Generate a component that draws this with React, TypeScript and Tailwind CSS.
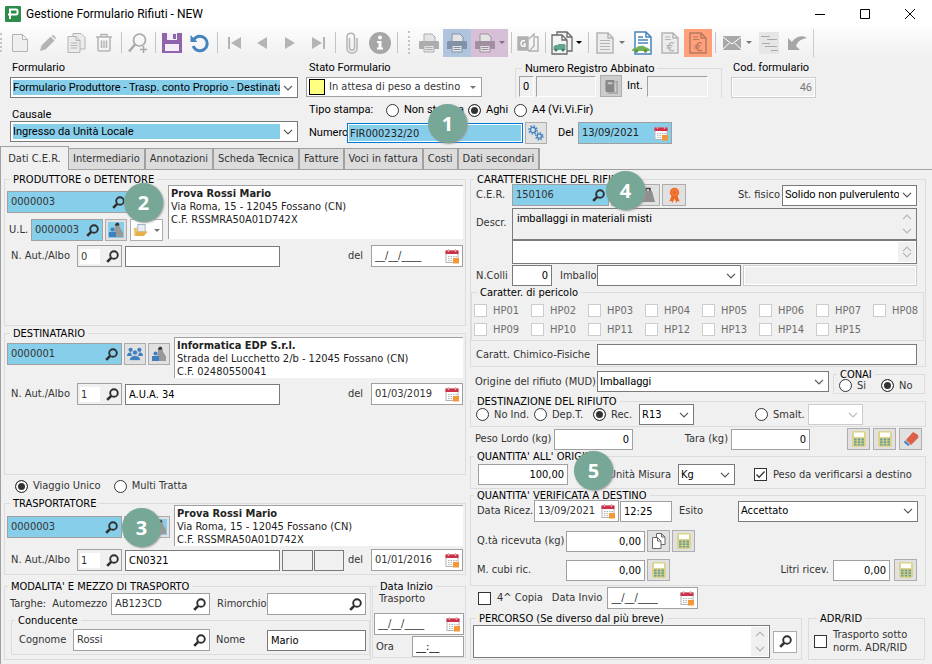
import type { ReactNode } from "react";

/* ---------- icons ---------- */

const Chevron = ({ tone = "#555" }: { tone?: string }) => (
  <svg viewBox="0 0 10 6" className="pointer-events-none h-[6px] w-[10px] shrink-0" fill="none" stroke={tone} strokeWidth="1.2">
    <path d="M1 .8 5 4.8 9 .8" />
  </svg>
);

const Caret = ({ tone = "#777" }: { tone?: string }) => (
  <svg viewBox="0 0 6 3" className="pointer-events-none h-[3px] w-[6px] shrink-0" fill={tone}>
    <path d="M0 0h6L3 3z" />
  </svg>
);

const Lens = () => (
  <svg viewBox="0 0 13 13" className="size-[13px] shrink-0" fill="none" stroke="#2f2f2f">
    <circle cx="8" cy="5" r="3.8" strokeWidth="1.9" />
    <path d="M5.2 7.8 1.2 11.8" strokeWidth="2.6" />
  </svg>
);

const Calendar = () => (
  <svg viewBox="0 0 15 15" className="size-[15px] shrink-0">
    <rect x="1" y="2" width="12" height="11.5" fill="#fff" stroke="#b4b4b4" />
    <rect x=".5" y="1.5" width="13" height="3.5" fill="#d0314a" />
    <path d="M3.5 0v3M10.5 0v3" stroke="#e9a3ad" strokeWidth="1.2" />
    <path d="M3 7.5h9M3 9.5h9M3 11.5h9" stroke="#b4b4b4" strokeDasharray="1.5 1" />
    <rect x="8" y="9" width="6" height="5.5" fill="#f2983b" />
  </svg>
);

const Calculator = () => (
  <svg viewBox="0 0 14 16" className="h-[16px] w-[14px]">
    <rect width="14" height="16" rx="2" fill="#ddd38a" />
    <rect x="2" y="1.5" width="10" height="4.5" fill="#fff" />
    <g fill="#6f9f90">
      <path d="M2 7.5h2.6v2H2zM5.7 7.5h2.6v2H5.7zM9.4 7.5H12v2H9.4zM2 10.2h2.6v1.8H2zM5.7 10.2h2.6V12H5.7zM9.4 10.2H12V12H9.4zM2 12.8h2.6v1.6H2zM5.7 12.8h2.6v1.6H5.7zM9.4 12.8H12v1.6H9.4z" />
    </g>
  </svg>
);

const Eraser = () => (
  <svg viewBox="0 0 16 16" className="size-[16px]">
    <path d="M10 1.5 14.5 4 15 6.5 8 13.5 3.5 9z" fill="#dc6047" stroke="#dc6047" strokeLinejoin="round" />
    <path d="M2 9.2 7 14 5 14.8 1 11.5z" fill="#3f83c4" />
  </svg>
);

const Operator = ({ highlight = false }: { highlight?: boolean }) => (
  <svg viewBox="0 0 16 16" className="size-[16px]">
    {highlight && <rect width="16" height="16" fill="#87ceeb" />}
    <path d="M7 2.5 9 .5l2 1 1 4 3 5v4.500H6z" fill="#999" />
    <path d="M7 2.5 9 .5l2 1 .3 1.700L8 4z" fill="#333" />
    <circle cx="4.500" cy="7.500" r="2" fill="#3f7fbf" />
    <path d="M1 10h7v5H1z" fill="#3f7fbf" />
  </svg>
);

const People = () => (
  <svg viewBox="0 0 16 16" className="size-[16px]" fill="#3f7fbf">
    <circle cx="3.600" cy="3.800" r="2.100" />
    <circle cx="12.400" cy="3.800" r="2.100" />
    <path d="M0 10c0-3 2-4 4-3.500L5 10zM16 10c0-3-2-4-4-3.500L11 10z" />
    <circle cx="8" cy="6.500" r="2.600" stroke="#e1e1e1" strokeWidth=".7" />
    <path d="M2.500 14.500c0-3.500 2.500-5 5.500-5s5.500 1.500 5.500 5z" stroke="#e1e1e1" strokeWidth=".7" />
  </svg>
);

const Weight = () => (
  <svg viewBox="0 0 16 16" className="size-[16px]">
    <path d="M4 4h8l3 11H1z" fill="#8f8f8f" />
    <path d="M6 4V1.500h4V4" fill="none" stroke="#444" strokeWidth="1.600" />
  </svg>
);

const Ribbon = () => (
  <svg viewBox="0 0 16 18" className="h-[17px] w-[15px]" fill="#ed6b23">
    <path d="m5 9-2.500 6.500 2.300-.6 1.200 2L8 12l2 4.900 1.200-2 2.300.6L11 9z" />
    <circle cx="8" cy="5.800" r="5" />
    <circle cx="8" cy="5.800" r="3" stroke="#f4a173" strokeWidth=".6" />
  </svg>
);

const Gears = () => (
  <svg viewBox="0 0 16 16" className="size-[16px]" fill="none" stroke="#3f7fbf">
    <circle cx="5" cy="5" r="2.600" strokeWidth="1.300" />
    <circle cx="5" cy="5" r="4" strokeWidth="1.500" strokeDasharray="1.500 1.640" />
    <circle cx="11.300" cy="11.300" r="2.100" strokeWidth="1.300" />
    <circle cx="11.300" cy="11.300" r="3.500" strokeWidth="1.500" strokeDasharray="1.400 1.350" />
  </svg>
);

const FolderForm = () => (
  <svg viewBox="0 0 16 14" className="h-[13px] w-[16px]">
    <rect x="4.500" y=".5" width="8" height="8" fill="#e6eef5" stroke="#9db4c8" />
    <path d="M0 4h4v5h7l4-1-4 5H1z" fill="#f0c46b" />
    <path d="M1 13 4 8h11l-4 5z" fill="#e7b04c" />
  </svg>
);

const Pages = () => (
  <svg viewBox="0 0 14 16" className="h-[16px] w-[14px]" fill="#fff" stroke="#6a6a6a">
    <path d="M4.500.5h5l3.500 3.500v7.500H4.500zM9.500.5V4H13" />
    <path d="M.5 4.500h5L9 8v7.500H.5zM5.500 4.500V8H9" />
  </svg>
);

const Book = () => (
  <svg viewBox="0 0 16 16" className="size-[15px]">
    <path d="M2 1h9v13H3.500C2 14 1.500 13 1.500 12V2z" fill="#888" />
    <path d="M12 3h2v12H4" fill="none" stroke="#a2a2a2" strokeWidth="1.500" />
    <path d="M4 3.500h5v2H4z" fill="#ccc" />
  </svg>
);

const G = "#b4b4b4";

const Doc = ({ stroke = G, fill = "none", children }: { stroke?: string; fill?: string; children?: ReactNode }) => (
  <svg viewBox="0 0 20 22" className="h-[22px] w-[20px]" fill={fill} stroke={stroke} strokeWidth="1.500">
    <path d="M2 1h11l5 5v15H2zM13 1v5h5" />
    {children}
  </svg>
);

const Euro = ({ stroke = G, fill = "none" }: { stroke?: string; fill?: string }) => (
  <Doc stroke={stroke} fill={fill}>
    <path d="M5 5h5M5 7.500h6" strokeWidth="1.200" />
    <path d="M14 11.200c-3.500-1.500-5.500.8-5.500 3.600s2 4.900 5.500 3.500M6.500 13.700h6M6.500 15.800h5" strokeWidth="1.300" fill="none" />
  </Doc>
);

const Printer = ({ tone = "#a8a8a8" }: { tone?: string }) => (
  <svg viewBox="0 0 22 20" className="h-[20px] w-[22px]">
    <path d="M6 1h8l3 3v5H6z" fill="#e4e4e4" stroke={tone} />
    <path d="M2.500 8h17c1 0 1.500.5 1.500 1.500V16H1V9.500C1 8.500 1.500 8 2.500 8z" fill={tone} />
    <path d="M6 12.500h10V19H6z" fill="#e4e4e4" stroke={tone} />
    <path d="M7.500 14.500h7M7.500 16.500h7" stroke={tone} />
  </svg>
);

/* ---------- building blocks ---------- */

const plain = "font-[Roboto,'Liberation_Sans',sans-serif]";
const humanist = "font-['DejaVu_Sans_Condensed','DejaVu_Sans',sans-serif]";

function Group({ legend, className = "", children }: { legend: string; className?: string; children: ReactNode }) {
  return (
    <fieldset className={`min-w-0 border border-[#dcdcdc] ${className}`}>
      <legend className="ml-[3px] h-0 px-[3px] leading-[0px] whitespace-nowrap text-black">{legend}</legend>
      {children}
    </fieldset>
  );
}

function Badge({ n, className }: { n: number; className: string }) {
  return (
    <span
      className={`absolute z-10 flex size-[39px] items-center justify-center rounded-full bg-[#76a797] font-['Open_Sans',sans-serif] text-[20px] font-bold text-white shadow-[1px_1px_2px_#999] ${className}`}
    >
      {n}
    </span>
  );
}

function Box({ label, value = "", className = "", id, disabled }: { label?: string; value?: string; className?: string; id?: string; disabled?: boolean }) {
  return (
    <input
      id={id}
      aria-label={label}
      defaultValue={value}
      disabled={disabled}
      className={`h-[21px] min-w-0 border px-[3px] outline-none ${disabled ? "text-[#7a7a7a]" : "text-black"} ${className}`}
    />
  );
}

function SearchBox({ label, value = "", className = "", id }: { label: string; value?: string; className?: string; id?: string }) {
  return (
    <div className={`flex h-[22px] shrink-0 items-center border border-[#a0a0a0] px-[3px] ${className}`}>
      <input id={id} aria-label={label} defaultValue={value} className="w-0 min-w-0 flex-1 bg-transparent outline-none" />
      <button type="button" aria-label={`Cerca ${label}`}>
        <Lens />
      </button>
    </div>
  );
}

function DateBox({ label, value = "__/__/____", className = "", id }: { label: string; value?: string; className?: string; id?: string }) {
  return (
    <div className={`flex h-[22px] shrink-0 items-center border border-[#a0a0a0] pr-[2px] pl-[3px] ${className}`}>
      <input id={id} aria-label={label} defaultValue={value} className="w-0 min-w-0 flex-1 bg-transparent outline-none" />
      <button type="button" aria-label={`Calendario ${label}`}>
        <Calendar />
      </button>
    </div>
  );
}

function Combo({ label, value = "", className = "", id, selectClass = "", disabled }: { label?: string; value?: string; className?: string; id?: string; selectClass?: string; disabled?: boolean }) {
  return (
    <div className={`flex h-[21px] min-w-0 items-center border bg-white p-[2px] pr-[4px] ${disabled ? "border-[#ccc]" : "border-[#7a7a7a]"} ${className}`}>
      <select id={id} aria-label={label} disabled={disabled} className={`mr-[3px] h-full w-0 min-w-0 flex-1 appearance-none overflow-hidden text-black outline-none ${selectClass}`}>
        <option>{value}</option>
      </select>
      <Chevron tone={disabled ? "#bbb" : "#555"} />
    </div>
  );
}

function Radio({ name, text, checked, className = "" }: { name: string; text: string; checked?: boolean; className?: string }) {
  return (
    <label className={`flex items-center gap-[5px] whitespace-nowrap ${className}`}>
      <input
        type="radio"
        name={name}
        defaultChecked={checked}
        className="size-[13px] shrink-0 appearance-none rounded-full border border-[#333] bg-white checked:bg-[#333] checked:shadow-[inset_0_0_0_2px_white]"
      />
      {text}
    </label>
  );
}

function Tick({ text, checked, dim, className = "" }: { text: ReactNode; checked?: boolean; dim?: boolean; className?: string }) {
  return (
    <label className={`flex items-center gap-[6px] ${dim ? "text-[#6d6d6d]" : ""} ${className}`}>
      <span className="grid size-[13px] shrink-0">
        <input
          type="checkbox"
          disabled={dim}
          defaultChecked={checked}
          className={`peer col-start-1 row-start-1 appearance-none border bg-white ${dim ? "border-[#ccc]" : "border-[#333]"}`}
        />
        <svg viewBox="0 0 13 13" className="pointer-events-none invisible col-start-1 row-start-1 size-[13px] peer-checked:visible" fill="none" stroke="#333" strokeWidth="1.300">
          <path d="m2.500 6.500 2.700 2.800 5.300-5.800" />
        </svg>
      </span>
      {text}
    </label>
  );
}

function IconButton({ label, className = "w-[22px]", children }: { label: string; className?: string; children: ReactNode }) {
  return (
    <button type="button" aria-label={label} className={`flex h-[22px] shrink-0 items-center justify-center border border-[#adadad] ${className}`}>
      {children}
    </button>
  );
}

function Area({ label, value = "", className = "", areaClass = "", id }: { label: string; value?: string; className?: string; areaClass?: string; id?: string }) {
  return (
    <div className={`flex min-w-0 border border-[#7a7a7a] p-[1px] ${className}`}>
      <textarea id={id} aria-label={label} defaultValue={value} className={`min-w-0 flex-1 resize-none overflow-hidden px-[3px] pt-[2px] leading-[14px] text-black outline-none ${areaClass}`} />
      <div className="flex w-[17px] flex-col items-center justify-between bg-[#f0f0f0] py-[4px]">
        <span className="flex rotate-180"><Chevron tone="#b5b5b5" /></span>
        <Chevron tone="#b5b5b5" />
      </div>
    </div>
  );
}

function Person({ name, lines, className = "" }: { name: string; lines: string[]; className?: string }) {
  return (
    <address className={`min-w-0 flex-1 overflow-hidden border-t border-l border-[#a0a0a0] bg-white pt-[1px] pl-[2px] leading-[13px] whitespace-nowrap text-[#222] not-italic ${className}`}>
      <strong className="block font-bold">{name}</strong>
      {lines.map((l) => (
        <span key={l} className="block">{l}</span>
      ))}
    </address>
  );
}

function AuthRow({ who, n, value, date, className = "", children }: { who: string; n: string; value?: string; date?: string; className?: string; children?: ReactNode }) {
  return (
    <div className={`flex items-center ${className}`}>
      <label htmlFor={`aut-${who}`} className="w-[70px] shrink-0 pl-[4px] whitespace-nowrap">N. Aut./Albo</label>
      <div className="mr-[3px] flex h-[22px] w-[45px] shrink-0 items-center justify-between border border-[#a0a0a0] px-[2px]">
        <input id={`aut-${who}`} defaultValue={n} className="h-[15px] w-[20px] bg-white px-[1px] outline-none" />
        <button type="button" aria-label="Cerca autorizzazione"><Lens /></button>
      </div>
      <Box label="Autorizzazione" value={value} className="w-[155px] border-[#7a7a7a] bg-white" />
      {children}
      <label htmlFor={`del-${who}`} className="mr-[8px] ml-auto">del</label>
      <DateBox id={`del-${who}`} label="Data autorizzazione" value={date} className="w-[92px] bg-white" />
    </div>
  );
}

/* ---------- toolbar ---------- */

function Tool({ label, className = "", caret, caretTone, children }: { label: string; className?: string; caret?: boolean; caretTone?: string; children: ReactNode }) {
  return (
    <button type="button" aria-label={label} className={`flex h-[28px] shrink-0 items-center ${caret ? "w-[37px]" : "w-[28px]"} ${className}`}>
      <span className="flex w-[28px] justify-center">{children}</span>
      {caret && <Caret tone={caretTone} />}
    </button>
  );
}

const Sep = () => <span className="flex w-[6px] shrink-0 justify-center"><span className="h-[21px] w-px bg-[#c4c4c4]" /></span>;

function Toolbar() {
  return (
    <div className="flex h-[31px] items-center overflow-hidden bg-linear-to-b from-[#fcfcfc] to-[#f0f0f0]">
      <span className="mr-[4px] h-[19px] w-[2px] border-l-2 border-dotted border-[#c4c4c4]" />
      <Tool label="Nuovo">
        <svg viewBox="0 0 16 18" className="h-[18px] w-[16px]" fill="#efefef" stroke={G}><path d="M.5.500h10l5 5v12H.5zM10.500.500v5h5" /></svg>
      </Tool>
      <Tool label="Modifica">
        <svg viewBox="0 0 18 18" className="size-[18px]" fill="#b4b4b4"><path d="m1 17 1.500-5.500L11.500 2.500l4 4-9 9zM12.500 1.600c1.500-2 5.500 2 3.900 3.900z" /></svg>
      </Tool>
      <Tool label="Duplica">
        <svg viewBox="0 0 19 20" className="h-[20px] w-[19px]" fill="#ececec" stroke={G}><path d="M6 .5h8l4 4V16H6z" /><path d="M1 3.500h8l4 4v12H1zM9 3.500v4h4M3.500 10h7M3.500 12.500h7M3.500 15h7" /></svg>
      </Tool>
      <Tool label="Elimina">
        <svg viewBox="0 0 18 19" className="h-[19px] w-[18px]" fill="none" stroke={G} strokeWidth="1.500"><path d="M1 4h16M6 4V1.500h6V4M3 4v12.500c0 1 .5 1.500 1.500 1.500h9c1 0 1.500-.5 1.500-1.500V4M6.500 7.500v7.500M9 7.500v7.500M11.500 7.500v7.500" /></svg>
      </Tool>
      <Sep />
      <Tool label="Cerca">
        <svg viewBox="0 0 20 20" className="size-[20px]" fill="none" stroke="#a8a8a8"><circle cx="11.500" cy="7" r="6" strokeWidth="1.700" /><path d="M7 11.500 1 18.500" strokeWidth="2.500" /><path d="M15.500 13v7M12 16.500h7" strokeWidth="1.600" /></svg>
      </Tool>
      <Sep />
      <Tool label="Salva">
        <svg viewBox="0 0 20 20" className="size-[20px]"><path d="M0 0h20v20H0z" fill="#9064ad" /><path d="M5 0h10v7H5zM3 11h14v7H3z" fill="#f4eef7" /><path d="M11 1h3v5h-3z" fill="#9064ad" /></svg>
      </Tool>
      <Tool label="Annulla modifiche">
        <svg viewBox="0 0 20 20" className="size-[20px]" fill="none" stroke="#4684bf" strokeWidth="3"><path d="M4 6.500a7.200 7.200 0 1 1-.8 6.500" /><path d="M.5 2v7h7z" fill="#4684bf" stroke="none" /></svg>
      </Tool>
      <Sep />
      <Tool label="Primo"><svg viewBox="0 0 13 12" className="h-[12px] w-[13px]" fill={G}><path d="M0 0h2v12H0zM13 0v12L3 6z" /></svg></Tool>
      <Tool label="Precedente"><svg viewBox="0 0 10 12" className="h-[12px] w-[10px]" fill={G}><path d="M10 0v12L0 6z" /></svg></Tool>
      <Tool label="Successivo"><svg viewBox="0 0 10 12" className="h-[12px] w-[10px]" fill={G}><path d="M0 0v12l10-6z" /></svg></Tool>
      <Tool label="Ultimo"><svg viewBox="0 0 13 12" className="h-[12px] w-[13px]" fill={G}><path d="M11 0h2v12h-2zM0 0v12l10-6z" /></svg></Tool>
      <Sep />
      <Tool label="Allegati">
        <svg viewBox="0 0 12 22" className="h-[22px] w-[12px]" fill="none" stroke={G} strokeWidth="1.500"><path d="M3.500 6v9.500c0 3.500 5 3.500 5 0V5c0-5-7.500-5-7.500 0v11.500c0 6 10 6 10 0V6" /></svg>
      </Tool>
      <Tool label="Informazioni">
        <svg viewBox="0 0 22 22" className="size-[22px]"><circle cx="11" cy="11" r="11" fill="#a6a6a6" /><circle cx="11" cy="5.500" r="1.900" fill="#fff" /><path d="M8 9h4.500v6.500H14V17.500H8v-2h1.500V11H8z" fill="#fff" /></svg>
      </Tool>
      <Sep />
      <span className="mr-[5px] ml-[8px] h-[23px] w-[2px] shrink-0 border-l-2 border-dotted border-[#c4c4c4]" />
      <Tool label="Stampa"><Printer tone="#adadad" /></Tool>
      <Tool label="Stampa aghi" className="bg-[#b0c4de]"><Printer tone="#8292a6" /></Tool>
      <Tool label="Stampa A4" className="bg-[#d8bfd8]" caret><Printer tone="#a18ea1" /></Tool>
      <Sep />
      <Tool label="Registro">
        <svg viewBox="0 0 22 20" className="h-[20px] w-[22px]" fill="none" stroke="#b0b0b0" strokeWidth="1.400"><path d="M1 4h10v13H1z" fill="#b0b0b0" /><path d="M12 6l5-5v12l-5 5M18 4h3v14H11" /><path d="M8 8c-2-1-4 0-4 2.500s2 3.500 4 2.500v-2H6.500" stroke="#fff" /></svg>
      </Tool>
      <Sep />
      <Tool label="Documenti di trasporto" caret caretTone="#000">
        <svg viewBox="0 0 22 24" className="h-[24px] w-[22px]" fill="#f4f4f4" stroke="#6a6a6a" strokeWidth="1.300"><path d="M6 1h10l5 5v14H6zM16 1v5h5" /><path d="M1 4h10l5 5v14H1zM11 4v5h5" /><path d="M2.500 19v-3.500l2-1.500h2l1-1h6l1 1v5z" fill="#62a58c" stroke="none" /><circle cx="5" cy="19" r="1.500" fill="#3c7a63" stroke="none" /><circle cx="12" cy="19" r="1.500" fill="#3c7a63" stroke="none" /></svg>
      </Tool>
      <Sep />
      <Tool label="Documento" caret>
        <Doc fill="#ececec"><path d="M5 8.500h10M5 11.500h10M5 14.500h10M5 17.500h10" strokeWidth="1.200" /></Doc>
      </Tool>
      <Tool label="Documento veicolo">
        <svg viewBox="0 0 20 24" className="h-[24px] w-[20px]" fill="#fff" stroke="#4684bf" strokeWidth="1.500"><path d="M3 1h11l5 5v17H3zM14 1v5h5M6 6h5M6 9h10M6 12h10" /><path d="M0 20c0-2.500 2-3 4-3 2-3 8-3 10-.5 2 .3 4 1 4 3.500z" fill="#74b05a" stroke="none" /><circle cx="4.500" cy="20" r="1.800" fill="#5a9345" stroke="none" /><circle cx="13.500" cy="20" r="1.800" fill="#5a9345" stroke="none" /></svg>
      </Tool>
      <Tool label="Fattura"><Euro fill="#ececec" /></Tool>
      <Tool label="Fattura non emessa" className="bg-[#ffa07a]"><Euro stroke="#b97860" /></Tool>
      <Sep />
      <Tool label="Invia e-mail" caret>
        <svg viewBox="0 0 18 14" className="h-[14px] w-[18px]"><path d="M0 0h18v14H0z" fill="#a8a8a8" /><path d="m0 1 9 7 9-7M0 13l6.500-6M18 13l-6.500-6" fill="none" stroke="#fff" /></svg>
      </Tool>
      <Tool label="Note">
        <svg viewBox="0 0 20 22" className="h-[22px] w-[20px]"><path d="M0 0h20v22H0z" fill="#e6e6e6" /><path d="M2 4.500h9M8 7.500h10M3 11.500h8M6 14.500h12M12 18.500h7" stroke="#aaa" /></svg>
      </Tool>
      <Tool label="Rimanda">
        <svg viewBox="0 0 20 16" className="h-[16px] w-[20px]" fill="#a6a6a6"><path d="M1 3v12h12l-4-4c2-5 5-7 11-8C14-1 8 3 5 7z" /></svg>
      </Tool>
      <span className="ml-[2px] h-[28px] w-px bg-[#ccc]" />
    </div>
  );
}

/* ---------- page sections ---------- */

const tabs = ["Intermediario", "Annotazioni", "Scheda Tecnica", "Fatture", "Voci in fattura", "Costi", "Dati secondari"];
const hazards = Array.from({ length: 15 }, (_, i) => `HP${String(i + 1).padStart(2, "0")}`);

function Header() {
  return (
    <div className={`flex h-[88px] gap-[8px] pt-[4px] pl-[10px] leading-[12px] text-black ${plain}`}>
      <div className="flex w-[288px] flex-col">
        <label htmlFor="formulario" className="mb-[3px] pl-[2px]">Formulario</label>
        <Combo id="formulario" value="Formulario Produttore - Trasp. conto Proprio - Destinatario" selectClass="bg-[#87ceeb]" />
        <label htmlFor="causale" className="mt-[11px] pl-[2px]">Causale</label>
        <Combo id="causale" value="Ingresso da Unità Locale" selectClass="bg-[#87ceeb]" />
      </div>
      <div className="flex flex-1 flex-col">
        <div className="flex">
          <div className="flex w-[176px] flex-col">
            <label htmlFor="stato" className="mb-[3px] pl-[3px]">Stato Formulario</label>
            <div className="flex h-[20px] items-center border border-[#a0a0a0] bg-white pr-[5px] pl-[2px]">
              <span className="size-[16px] border border-black bg-[#ffff80]" />
              <select id="stato" className={`ml-[4px] w-0 flex-1 appearance-none text-[#333] outline-none ${humanist}`}>
                <option>In attesa di peso a destino</option>
              </select>
              <Caret />
            </div>
          </div>
          <Group legend="Numero Registro Abbinato" className="mt-[6px] ml-[33px] h-[30px] w-[207px] border-b-0 px-[3px] pt-[6px]">
            <div className="flex items-center">
              <Box label="Numero registro" value="0" className="mr-[2px] w-[15px] border-r-white border-b-white border-[#a0a0a0] bg-[#f0f0f0]" />
              <Box label="Registro" className="mr-[4px] w-[60px] border-r-white border-b-white border-[#a0a0a0] bg-[#f0f0f0]" />
              <IconButton label="Apri registro" className="w-[22px] bg-[#ccc]"><Book /></IconButton>
              <label htmlFor="int" className="mr-[4px] ml-[5px]">Int.</label>
              <Box id="int" className="w-[61px] border-r-white border-b-white border-[#a0a0a0] bg-[#f0f0f0]" />
            </div>
          </Group>
          <div className="ml-[9px] flex w-[85px] flex-col">
            <label htmlFor="cod" className="mb-[3px] pl-[2px] whitespace-nowrap">Cod. formulario</label>
            <Box id="cod" value="46" disabled className="border-[#ccc] bg-[#f0f0f0] text-right shadow-[inset_0_0_0_1px_white]" />
          </div>
        </div>
        <div className="mt-[6px] flex h-[12px] items-center pl-[3px]">
          <span className="w-[77px]">Tipo stampa:</span>
          <Radio name="stampa" text="Non stampa" className="w-[82px]" />
          <Radio name="stampa" text="Aghi" checked className="w-[46px]" />
          <Radio name="stampa" text="A4 (Vi.Vi.Fir)" />
        </div>
        <div className="mt-[6px] flex items-center pl-[3px]">
          <label htmlFor="numero" className="w-[38px]">Numero</label>
          <div className="relative">
            <input id="numero" defaultValue="FIR000232/20" className={`block h-[20px] w-[176px] border border-[#0078d7] bg-[#87ceeb] px-[2px] text-[#222] shadow-[inset_0_0_0_1px_white] outline-none ${humanist}`} />
            <Badge n={1} className="-top-[19px] left-[81px]" />
          </div>
          <IconButton label="Genera numero" className="mr-[11px] ml-[2px] w-[22px] bg-[#e1e1e1]"><Gears /></IconButton>
          <label htmlFor="del" className="w-[20px]">Del</label>
          <DateBox id="del" label="Del" value="13/09/2021" className={`w-[94px] bg-[#87ceeb] text-[#222] ${humanist}`} />
        </div>
      </div>
    </div>
  );
}

function LeftColumn() {
  return (
    <div className="flex min-w-0 flex-col">
      <Group legend="PRODUTTORE o DETENTORE" className="min-h-[147px] px-[2px] pt-[5px]">
        <div className="flex">
          <div className="relative w-[161px] shrink-0 pt-[6px]">
            <SearchBox label="Produttore" value="0000003" className="w-[122px] bg-[#87ceeb]" />
            <Badge n={2} className="-top-[2px] left-[117px]" />
            <div className="mt-[6px] flex items-center">
              <label htmlFor="ul" className="w-[24px] pl-[2px]">U.L.</label>
              <SearchBox id="ul" label="U.L." value="0000003" className="w-[72px] bg-[#87ceeb]" />
              <IconButton label="Operatore" className="ml-[2px] w-[22px] bg-[#e1e1e1]"><Operator highlight /></IconButton>
              <IconButton label="Apri scheda" className="ml-[3px] w-[33px] gap-[5px] bg-white"><FolderForm /><Caret /></IconButton>
            </div>
          </div>
          <Person name="Prova Rossi Mario" lines={["Via Roma, 15 - 12045 Fossano (CN)", "C.F. RSSMRA50A01D742X"]} className="h-[54px]" />
        </div>
        <AuthRow who="produttore" n="0" className="mt-[4px]" />
      </Group>

      <Group legend="DESTINATARIO" className="mt-[7px] min-h-[142px] px-[2px] pt-[3px]">
        <div className="flex">
          <div className="flex w-[167px] shrink-0 gap-[2px] pt-[6px]">
            <SearchBox label="Destinatario" value="0000001" className="w-[115px] bg-[#87ceeb]" />
            <IconButton label="Anagrafica" className="w-[22px] bg-[#e1e1e1]"><People /></IconButton>
            <IconButton label="Operatore" className="w-[22px] bg-[#e1e1e1]"><Operator /></IconButton>
          </div>
          <Person name="Informatica EDP S.r.l." lines={["Strada del Lucchetto 2/b - 12045 Fossano (CN)", "C.F. 02480550041"]} className="h-[41px]" />
        </div>
        <AuthRow who="destinatario" n="1" value="A.U.A. 34" date="01/03/2019" className="mt-[5px]" />
      </Group>

      <div className="mb-[6px] flex h-[22px] items-center gap-[13px] pl-[11px]">
        <Radio name="viaggio" text="Viaggio Unico" checked />
        <Radio name="viaggio" text="Multi Tratta" />
      </div>

      <Group legend="TRASPORTATORE" className="min-h-[72px] px-[2px] pt-[1px]">
        <div className="flex">
          <div className="relative flex w-[167px] shrink-0 gap-[2px] pt-[11px]">
            <SearchBox label="Trasportatore" value="0000003" className="w-[115px] bg-[#87ceeb]" />
            <IconButton label="Anagrafica" className="w-[22px] bg-[#e1e1e1]"><People /></IconButton>
            <IconButton label="Operatore" className="w-[22px] bg-[#e1e1e1]"><Operator highlight /></IconButton>
            <Badge n={3} className="top-[3px] left-[115px]" />
          </div>
          <Person name="Prova Rossi Mario" lines={["Via Roma, 15 - 12045 Fossano (CN)", "C.F. RSSMRA50A01D742X"]} className="h-[41px]" />
        </div>
        <AuthRow who="trasportatore" n="1" value="CN0321" date="01/01/2016" className="mt-[3px]">
          <Box label="Categoria" className="ml-[2px] w-[31px] border-[#7a7a7a] bg-[#f0f0f0]" />
          <Box label="Classe" className="ml-[1px] w-[30px] border-[#7a7a7a] bg-[#f0f0f0]" />
        </AuthRow>
      </Group>

      <div className="mt-[11px] flex items-start gap-[1px]">
        <Group legend="MODALITA' E MEZZO DI TRASPORTO" className="h-[74px] flex-1 pt-[6px]">
          <div className="flex items-center pr-[4px] pl-[5px]">
            <span className="mr-[6px]">Targhe:</span>
            <label htmlFor="automezzo">Automezzo</label>
            <SearchBox id="automezzo" label="Automezzo" value="AB123CD" className="ml-auto w-[99px] bg-white" />
            <label htmlFor="rimorchio" className="w-[57px] pl-[7px]">Rimorchio</label>
            <SearchBox id="rimorchio" label="Rimorchio" className="w-[99px] bg-white" />
          </div>
          <Group legend="Conducente" className="mt-[5px] ml-[6px] h-[35px] pt-[8px] pr-[3px]">
            <div className="flex items-center">
              <label htmlFor="cognome" className="w-[61px] pl-[7px]">Cognome</label>
              <SearchBox id="cognome" label="Cognome" value="Rossi" className="flex-1 bg-white" />
              <label htmlFor="nome" className="w-[57px] pl-[6px]">Nome</label>
              <Box id="nome" value="Mario" className="w-[99px] border-[#7a7a7a] bg-white" />
            </div>
          </Group>
        </Group>
        <Group legend="Data Inizio" className="h-[72px] w-[94px] px-[1px] pt-[5px]">
          <label htmlFor="inizio" className="block pl-[5px] leading-[13px]">Trasporto</label>
          <DateBox id="inizio" label="Data inizio trasporto" className="mt-[8px] bg-white" />
          <div className="mt-[1px] flex items-center justify-between">
            <label htmlFor="ora" className="pl-[2px]">Ora</label>
            <Box id="ora" value="__:__" className="w-[52px] border-[#a0a0a0] bg-white" />
          </div>
        </Group>
      </div>
    </div>
  );
}

const calc = "w-[23px] bg-[#e1e1e1]";

function RightColumn() {
  return (
    <div className="flex min-w-0 flex-col">
      <Group legend="CARATTERISTICHE DEL RIFIUTO" className="h-[188px] pt-[4px]">
        <div className="relative flex items-center pr-[8px] pl-[5px]">
          <label htmlFor="cer" className="w-[36px] shrink-0">C.E.R.</label>
          <SearchBox id="cer" label="C.E.R." value="150106" className="w-[97px] bg-[#87ceeb]" />
          <IconButton label="Elenco" className="ml-[2px] w-[24px] bg-[#e1e1e1]"><People /></IconButton>
          <IconButton label="Peso" className="ml-px w-[24px] bg-[#e1e1e1]"><Weight /></IconButton>
          <IconButton label="Certificato" className="ml-[2px] w-[24px] bg-[#e1e1e1]"><Ribbon /></IconButton>
          <Badge n={4} className="-top-[13px] left-[135px]" />
          <label htmlFor="fisico" className="mr-[2px] ml-auto whitespace-nowrap">St. fisico</label>
          <Combo id="fisico" value="Solido non pulverulento" selectClass={plain} className="w-[135px]" />
        </div>
        <div className="mt-[2px] flex pr-[8px] pl-[5px]">
          <label htmlFor="descr" className="w-[36px] shrink-0 pt-[8px]">Descr.</label>
          <div className="flex min-w-0 flex-1 flex-col">
            <Area id="descr" label="Descrizione" value="imballaggi in materiali misti" className="h-[32px]" areaClass={`bg-[#f0f0f0] ${plain}`} />
            <Area label="Descrizione aggiuntiva" className="h-[24px] bg-white" />
          </div>
        </div>
        <div className="mt-[1px] flex items-center pr-[8px] pl-[5px]">
          <label htmlFor="colli" className="w-[36px] shrink-0">N.Colli</label>
          <Box id="colli" value="0" className="w-[40px] border-[#7a7a7a] bg-white text-right" />
          <label htmlFor="imballo" className="w-[45px] shrink-0 pl-[8px]">Imballo</label>
          <Combo id="imballo" className="w-[144px]" />
          <Box label="Descrizione imballo" disabled className="ml-[2px] flex-1 border-[#ccc] bg-[#f0f0f0] shadow-[inset_0_0_0_1px_white]" />
        </div>
        <Group legend="Caratter. di pericolo" className="mt-[6px] mr-[1px] h-[49px] pt-[8px] pl-[2px]">
          <div className="grid grid-cols-[repeat(7,1fr)_50px]">
            {hazards.map((h) => (
              <Tick key={h} text={h} dim className="h-[19px]" />
            ))}
          </div>
        </Group>
        <div className="mt-[3px] flex items-center pr-[8px] pl-[5px]">
          <label htmlFor="chimico" className="w-[121px] shrink-0">Caratt. Chimico-Fisiche</label>
          <Box id="chimico" className="flex-1 border-[#7a7a7a] bg-white" />
        </div>
      </Group>

      <div className="mt-[4px] flex pr-[1px] pl-[5px]">
        <label htmlFor="origine" className="w-[122px] shrink-0 pt-[4px] whitespace-nowrap">Origine del rifiuto (MUD)</label>
        <Combo id="origine" value="Imballaggi" selectClass={plain} className="flex-1" />
        <Group legend="CONAI" className="mt-[3px] ml-[4px] h-[20px] w-[92px]">
          <div className="flex h-[21px] items-center gap-[15px] pl-[5px]">
            <Radio name="conai" text="Si" />
            <Radio name="conai" text="No" checked />
          </div>
        </Group>
      </div>

      <Group legend="DESTINAZIONE DEL RIFIUTO" className="mt-[7px] h-[26px] pt-[2px]">
        <div className="flex items-center pl-[5px]">
          <Radio name="destinazione" text="No Ind." className="w-[58px]" />
          <Radio name="destinazione" text="Dep.T." className="w-[59px]" />
          <Radio name="destinazione" text="Rec." checked className="w-[46px]" />
          <Combo label="Codice recupero" value="R13" className="w-[55px]" />
          <Radio name="destinazione" text="Smalt." className="ml-[61px] w-[53px]" />
          <Combo label="Codice smaltimento" disabled className="w-[55px]" />
        </div>
      </Group>

      <div className="mt-[1px] flex items-center pr-[4px] pl-[5px]">
        <label htmlFor="lordo" className="w-[79px] shrink-0 whitespace-nowrap">Peso Lordo (kg)</label>
        <Box id="lordo" value="0" className="w-[79px] border-[#a0a0a0] bg-white text-right" />
        <label htmlFor="tara" className="w-[98px] pr-[3px] text-right">Tara (kg)</label>
        <Box id="tara" value="0" className="w-[79px] border-[#a0a0a0] bg-white text-right" />
        <div className="ml-auto flex gap-[3px]">
          <IconButton label="Calcola peso" className={calc}><Calculator /></IconButton>
          <IconButton label="Calcola tara" className={calc}><Calculator /></IconButton>
          <IconButton label="Azzera" className={calc}><Eraser /></IconButton>
        </div>
      </div>

      <Group legend="QUANTITA'  ALL' ORIGINE" className="mt-[6px] h-[33px] pt-[7px]">
        <div className="relative flex items-center pl-[7px]">
          <Box label="Quantità all'origine" value="100,00" className="w-[90px] border-[#a0a0a0] bg-white text-right" />
          <Badge n={5} className="-top-[13px] left-[103px]" />
          <label htmlFor="misura" className="w-[110px] pr-[7px] text-right">Unità Misura</label>
          <Combo id="misura" value="Kg" className="w-[57px]" />
          <Tick text="Peso da verificarsi a destino" checked className="ml-[19px] whitespace-nowrap" />
        </div>
      </Group>

      <Group legend="QUANTITA' VERIFICATA A DESTINO" className="mt-[6px] h-[91px] pt-[4px]">
        <div className="flex items-center pr-[7px] pl-[6px]">
          <label htmlFor="ricez" className="w-[57px] shrink-0 whitespace-nowrap">Data Ricez.</label>
          <DateBox id="ricez" label="Data ricezione" value="13/09/2021" className="w-[85px] bg-white" />
          <Box label="Ora ricezione" value="12:25" className="ml-px w-[52px] border-[#a0a0a0] bg-white" />
          <label htmlFor="esito" className="w-[66px] shrink-0 pl-[7px]">Esito</label>
          <Combo id="esito" value="Accettato" className="flex-1" />
        </div>
        <div className="mt-[8px] flex items-center pl-[6px]">
          <label htmlFor="ricevuta" className="w-[89px] shrink-0 whitespace-nowrap">Q.tà ricevuta (kg)</label>
          <Box id="ricevuta" value="0,00" className="mr-[2px] w-[79px] border-[#a0a0a0] bg-white text-right" />
          <IconButton label="Copia quantità" className={calc}><Pages /></IconButton>
          <IconButton label="Calcola quantità" className="ml-[2px] w-[23px] bg-[#e1e1e1]"><Calculator /></IconButton>
        </div>
        <div className="mt-[7px] flex items-center pr-[8px] pl-[6px]">
          <label htmlFor="cubi" className="w-[89px] shrink-0">M. cubi ric.</label>
          <Box id="cubi" value="0,00" className="mr-[2px] w-[79px] border-[#a0a0a0] bg-white text-right" />
          <IconButton label="Calcola metri cubi" className={calc}><Calculator /></IconButton>
          <label htmlFor="litri" className="mr-[4px] ml-auto">Litri ricev.</label>
          <Box id="litri" value="0,00" className="mr-[4px] w-[57px] border-[#a0a0a0] bg-white text-right" />
          <IconButton label="Calcola litri" className={calc}><Calculator /></IconButton>
        </div>
      </Group>

      <div className="mt-[1px] flex items-center pl-[8px]">
        <Tick text="4^ Copia" />
        <label htmlFor="invio" className="mr-[5px] ml-[9px]">Data Invio</label>
        <DateBox id="invio" label="Data invio" className="w-[91px] bg-white" />
      </div>

      <div className="mt-[9px] flex gap-[6px] pr-[1px]">
        <Group legend="PERCORSO (Se diverso dal più breve)" className="h-[42px] flex-1 pt-[6px] pr-[4px] pl-[2px]">
          <div className="flex items-center gap-[3px]">
            <Area label="Percorso" className="h-[33px] flex-1 bg-white" />
            <IconButton label="Cerca percorso" className="w-[24px] bg-white"><Lens /></IconButton>
          </div>
        </Group>
        <Group legend="ADR/RID" className="h-[42px] w-[117px] pt-[9px] pl-[5px]">
          <Tick text={<span className="whitespace-nowrap">Trasporto sotto<br />norm. ADR/RID</span>} className="leading-[13px]" />
        </Group>
      </div>
    </div>
  );
}

export default function App() {
  return (
    <main className={`min-h-screen w-full overflow-hidden bg-[#f0f0f0] text-[11px] leading-[14px] text-[#333] ${humanist}`}>
      <header className="flex h-[27px] items-center bg-white pl-[5px] text-black">
        <svg viewBox="0 0 16 16" className="mr-[5px] size-[16px]">
          <rect width="16" height="16" rx="1" fill="#2d8c4a" />
          <path d="M5 13V3.500h6q1.500 0 1.500 1.500v2q0 1.500-1.500 1.500H3" fill="none" stroke="#fff" strokeWidth="2" />
        </svg>
        <h1 className="font-[Roboto,sans-serif] text-[12px]">Gestione Formulario Rifiuti - NEW</h1>
        <div className="ml-auto flex">
          <button type="button" aria-label="Riduci a icona" className="flex w-[45px] items-center justify-center"><svg viewBox="0 0 10 10" className="size-[10px]" stroke="#000"><path d="M0 5.500h10" /></svg></button>
          <button type="button" aria-label="Ingrandisci" className="flex w-[45px] items-center justify-center"><svg viewBox="0 0 10 10" className="size-[10px]" fill="none" stroke="#000"><path d="M.5.500h9v9h-9z" /></svg></button>
          <button type="button" aria-label="Chiudi" className="flex w-[45px] items-center justify-center"><svg viewBox="0 0 10 10" className="size-[10px]" stroke="#000"><path d="m0 0 10 10M10 0 0 10" /></svg></button>
        </div>
      </header>
      <Toolbar />
      <Header />
      <nav className="flex h-[24px] items-end">
        <button type="button" className="h-[24px] w-[69px] border-t border-r border-l border-[#a0a0a0] whitespace-nowrap">Dati C.E.R.</button>
        <div className="flex h-[22px] flex-1 border-b border-[#a0a0a0]">
          {tabs.map((t) => (
            <button key={t} type="button" className="border-t border-r-2 border-[#a0a0a0] bg-[#dcdcdc] px-[4px] whitespace-nowrap">{t}</button>
          ))}
        </div>
      </nav>
      <div className="grid grid-cols-[462fr_456fr] gap-x-[4px] border-l border-[#a0a0a0] pt-[9px] pr-[6px] pb-[4px] pl-[3px]">
        <LeftColumn />
        <RightColumn />
      </div>
    </main>
  );
}
